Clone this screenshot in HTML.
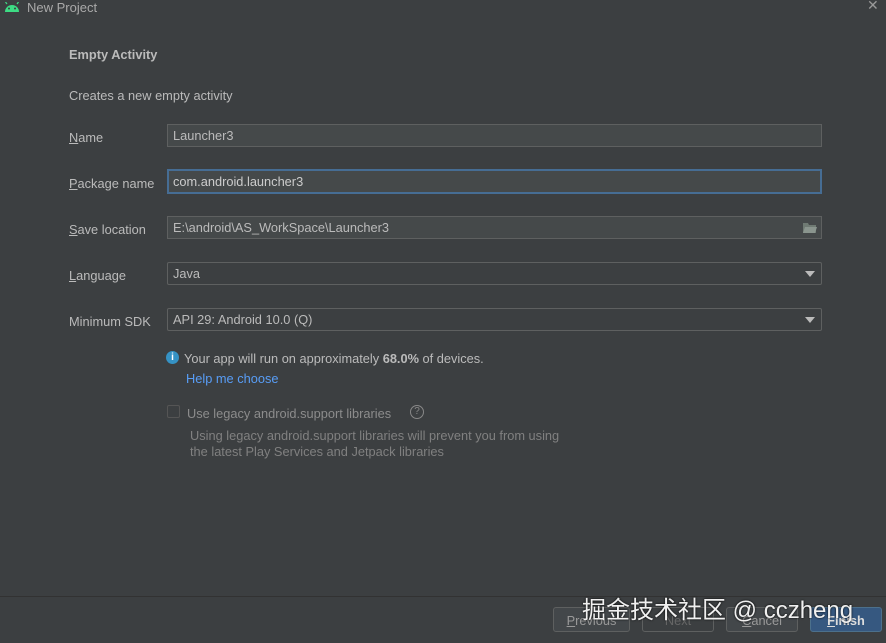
<!DOCTYPE html>
<html><head><style>
body{margin:0;width:886px;height:643px;background:#3c3f41;font-family:"Liberation Sans","Noto Sans CJK SC",sans-serif;font-size:12.8px;color:#bbbbbb;position:relative;overflow:hidden}
.a{position:absolute;white-space:nowrap}
.f{position:absolute;left:167px;width:655px;height:23px;background:#45494a;border:1px solid #5e6060;box-sizing:border-box;padding-left:5px;line-height:21px;color:#bbb}
.dd{background:#3c3f41;border-radius:2px}
.tri{position:absolute;right:6px;top:8px;width:0;height:0;border-left:5px solid transparent;border-right:5px solid transparent;border-top:6px solid #bbb}
.btn{position:absolute;top:607px;height:25px;border:1px solid #5e6060;border-radius:3px;box-sizing:border-box;text-align:center;line-height:25px;color:#999;background:#43474a}
</style></head><body>
<svg class="a" style="left:4px;top:2px" width="16" height="10" viewBox="0 0 16 10"><path d="M1 10 A7 7 0 0 1 15 10Z" fill="#3ddc84"/><circle cx="5" cy="6.5" r="1" fill="#3c3f41"/><circle cx="11" cy="6.5" r="1" fill="#3c3f41"/><path d="M3 2L1.5 0M13 2L14.5 0" stroke="#3ddc84" stroke-width="1.2"/></svg>
<div class="a" style="left:27px;top:0;font-size:13px;color:#a9a9a9">New Project</div>
<div class="a" style="left:867px;top:-3px;font-size:14px;color:#999">✕</div>
<div class="a" style="left:69px;top:47px;font-weight:bold;color:#bbb">Empty Activity</div>
<div class="a" style="left:69px;top:88px">Creates a new empty activity</div>
<div class="a" style="left:69px;top:130px"><u>N</u>ame</div>
<div class="f" style="top:124px">Launcher3</div>
<div class="a" style="left:69px;top:176px"><u>P</u>ackage name</div>
<div class="f" style="top:169px;height:25px;border:2px solid #466d94;padding-left:4px;color:#ccc">com.android.launcher3</div>
<div class="a" style="left:69px;top:222px"><u>S</u>ave location</div>
<div class="f" style="top:216px">E:\android\AS_WorkSpace\Launcher3
<svg style="position:absolute;right:4px;top:5px" width="14" height="11"><path d="M0 1h5l1 2h7v8H0z" fill="#6f7a73"/><path d="M2 5h12l-2 6H0z" fill="#8a958e"/></svg></div>
<div class="a" style="left:69px;top:268px"><u>L</u>anguage</div>
<div class="f dd" style="top:262px">Java<div class="tri"></div></div>
<div class="a" style="left:69px;top:314px">Minimum SDK</div>
<div class="f dd" style="top:308px">API 29: Android 10.0 (Q)<div class="tri"></div></div>
<div class="a" style="left:166px;top:351px;width:13px;height:13px;border-radius:50%;background:#3592c4;color:#fff;font-size:10px;font-weight:bold;text-align:center;line-height:13px">i</div>
<div class="a" style="left:184px;top:351px">Your app will run on approximately <b>68.0%</b> of devices.</div>
<div class="a" style="left:186px;top:371px;color:#589df6">Help me choose</div>
<div class="a" style="left:167px;top:405px;width:13px;height:13px;border:1px solid #555;box-sizing:border-box;border-radius:2px"></div>
<div class="a" style="left:187px;top:406px;color:#8c8c8c">Use legacy android.support libraries</div>
<div class="a" style="left:410px;top:405px;width:14px;height:14px;border:1px solid #888;border-radius:50%;box-sizing:border-box;font-size:10px;text-align:center;line-height:12px;color:#888">?</div>
<div class="a" style="left:190px;top:428px;color:#808080">Using legacy android.support libraries will prevent you from using</div>
<div class="a" style="left:190px;top:444px;color:#808080">the latest Play Services and Jetpack libraries</div>
<div class="a" style="left:0;top:596px;width:886px;height:1px;background:#323232"></div>
<div class="btn" style="left:553px;width:77px"><u>P</u>revious</div>
<div class="btn" style="left:642px;width:72px;color:#666;background:#3c3f41">Next</div>
<div class="btn" style="left:726px;width:72px"><u>C</u>ancel</div>
<div class="btn" style="left:810px;width:72px;background:#365880;border-color:#4c708c;color:#ddd;font-weight:bold"><u>F</u>inish</div>
<div class="a" style="left:582px;top:590px;font-size:24px;color:#f0f0f0;text-shadow:0 0 2px #000">掘金技术社区 @ cczheng</div>
</body></html>
